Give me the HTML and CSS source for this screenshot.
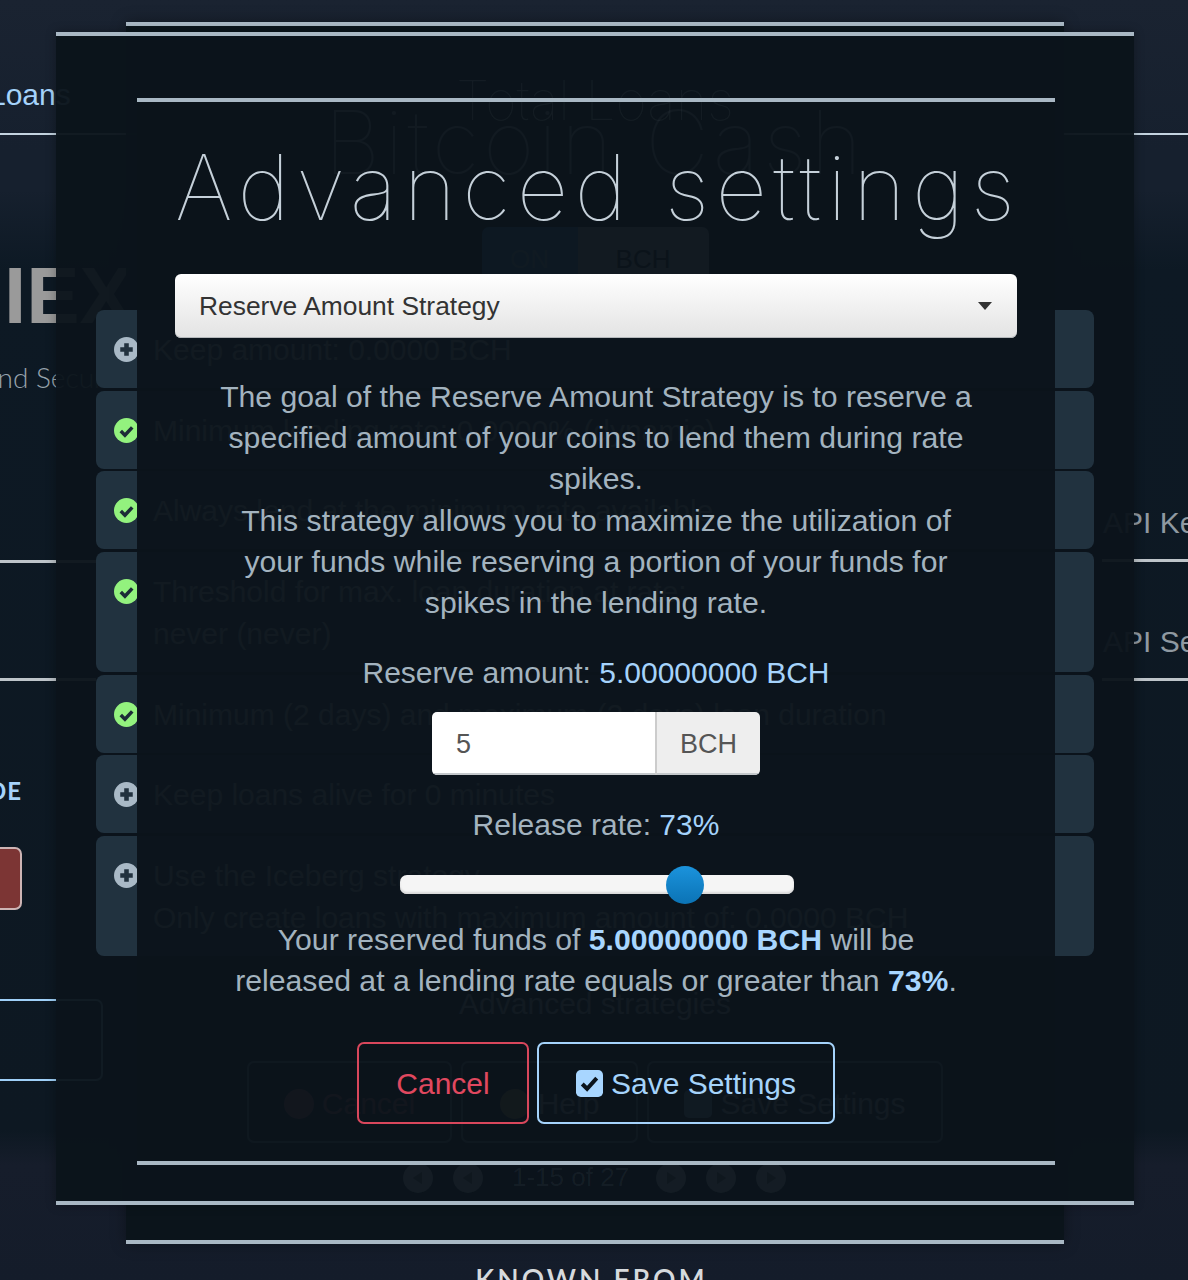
FILE: index.html
```html
<!DOCTYPE html>
<html lang="en">
<head>
<meta charset="utf-8">
<title>Advanced settings</title>
<link rel="stylesheet" href="styles.css">
</head>
<body>
<div class="site">
  <aside class="side side-left">
    <div class="tab"><span class="tab-text">Loans</span></div>
    <div class="logo">IE<span class="logo-x">X</span></div>
    <div class="tagline">and Secure</div>
    <div class="field field-a"></div>
    <div class="field field-b"></div>
    <div class="mode">MODE</div>
    <div class="red-btn"></div>
    <div class="blue-box"></div>
  </aside>

  <main class="center">
    <div class="eyebrow">Total Loans</div>
    <h2 class="coin">Bitcoin Cash</h2>
    <div class="toggle"><span class="toggle-on">ON</span><span class="toggle-off">BCH</span></div>
    <ul class="rows">
      <li class="row">
        <svg class="row-icon" viewBox="0 0 24 24"><circle cx="12" cy="12" r="12" fill="#a9b9c6"/><path d="M12 6v12M6 12h12" stroke="#22323f" stroke-width="4.4"/></svg>
        <span>Keep amount: 0.0000 BCH</span>
      </li>
      <li class="row">
        <svg class="row-icon" viewBox="0 0 24 24"><circle cx="12" cy="12" r="12" fill="#93f27e"/><path d="M6.5 12.5l4 4 7-7.5" fill="none" stroke="#1c2c37" stroke-width="3.4"/></svg>
        <span>Minimum lending rate: 0.0000% (dynamic)</span>
      </li>
      <li class="row">
        <svg class="row-icon" viewBox="0 0 24 24"><circle cx="12" cy="12" r="12" fill="#93f27e"/><path d="M6.5 12.5l4 4 7-7.5" fill="none" stroke="#1c2c37" stroke-width="3.4"/></svg>
        <span>Always lend at the minimum rate available</span>
      </li>
      <li class="row row-tall">
        <svg class="row-icon" viewBox="0 0 24 24"><circle cx="12" cy="12" r="12" fill="#93f27e"/><path d="M6.5 12.5l4 4 7-7.5" fill="none" stroke="#1c2c37" stroke-width="3.4"/></svg>
        <span>Threshold for max. loan duration at rate:<br>never (never)</span>
      </li>
      <li class="row">
        <svg class="row-icon" viewBox="0 0 24 24"><circle cx="12" cy="12" r="12" fill="#93f27e"/><path d="M6.5 12.5l4 4 7-7.5" fill="none" stroke="#1c2c37" stroke-width="3.4"/></svg>
        <span>Minimum (2 days) and maximum (2 days) loan duration</span>
      </li>
      <li class="row">
        <svg class="row-icon" viewBox="0 0 24 24"><circle cx="12" cy="12" r="12" fill="#a9b9c6"/><path d="M12 6v12M6 12h12" stroke="#22323f" stroke-width="4.4"/></svg>
        <span>Keep loans alive for 0 minutes</span>
      </li>
      <li class="row row-tall">
        <svg class="row-icon" viewBox="0 0 24 24"><circle cx="12" cy="12" r="12" fill="#a9b9c6"/><path d="M12 6v12M6 12h12" stroke="#22323f" stroke-width="4.4"/></svg>
        <span>Use the Iceberg strategy<br>Only create loans with maximum amount of: 0.0000 BCH</span>
      </li>
    </ul>
    <div class="strategies">Advanced strategies</div>
    <div class="ghost-actions">
      <span class="ghost-btn ghost-cancel"><i class="dot dot-red"></i>Cancel</span>
      <span class="ghost-btn ghost-help"><i class="dot dot-amber"></i>Help</span>
      <span class="ghost-btn ghost-save"><i class="square"></i>Save Settings</span>
    </div>
    <div class="pager">
      <i class="page-dot page-back"></i><i class="page-dot page-back"></i>
      <span class="page-label">1-15 of 27</span>
      <i class="page-dot"></i><i class="page-dot"></i><i class="page-dot"></i>
    </div>
    <div class="known">KNOWN FROM</div>
  </main>

  <aside class="side side-right">
    <div class="tab tab-right"></div>
    <div class="api api-key">API Key</div>
    <div class="api api-secret">API Secret</div>
  </aside>
</div>

<div class="modal modal-back"></div>
<div class="modal modal-mid"></div>

<section class="modal modal-front">
  <h1 class="title">Advanced settings</h1>
  <button class="select" type="button">
    <span>Reserve Amount Strategy</span>
    <svg class="caret" viewBox="0 0 14 8"><path d="M0 0h14L7 8z" fill="#333"/></svg>
  </button>
  <p class="copy">The goal of the Reserve Amount Strategy is to reserve a specified amount of your coins to lend them during rate spikes.<br>This strategy allows you to maximize the utilization of your funds while reserving a portion of your funds for spikes in the lending rate.</p>
  <p class="label label-amount">Reserve amount: <span class="accent">5.00000000 BCH</span></p>
  <div class="input-group">
    <span class="input-value">5</span>
    <span class="input-addon">BCH</span>
  </div>
  <p class="label label-rate">Release rate: <span class="accent">73%</span></p>
  <div class="slider"><span class="thumb"></span></div>
  <p class="summary">Your reserved funds of <strong>5.00000000 BCH</strong> will be<br>released at a lending rate equals or greater than <strong>73%</strong>.</p>
  <div class="actions">
    <button class="btn btn-cancel" type="button">Cancel</button>
    <button class="btn btn-save" type="button">
      <svg class="save-icon" viewBox="0 0 28 28"><rect width="28" height="28" rx="5" fill="#a8d6ff"/><path d="M6.5 14.5l5 5 10-11" fill="none" stroke="#0b141c" stroke-width="4.2"/></svg>
      Save Settings
    </button>
  </div>
</section>
</body>
</html>
```

FILE: styles.css
```css
* { box-sizing: border-box; }
html, body { margin: 0; padding: 0; }
body {
  position: relative;
  width: 1188px;
  height: 1280px;
  overflow: hidden;
  background: #0d1822;
  font-family: "Liberation Sans", Arial, sans-serif;
}

/* underlying page */
.site {
  display: grid;
  grid-template-columns: 96px 998px 94px;
  height: 1280px;
  background: linear-gradient(180deg, #1a2331 0, #16202e 150px, #16202e 190px, #0d1924 270px, #0d1822 1130px, #161d2b 1165px, #141c2a 100%);
}
.side { display: flex; flex-direction: column; min-width: 0; }
.tab {
  width: 140px;
  height: 135px;
  padding-top: 78px;
  border-bottom: 2px solid #c3d3df;
  flex: none;
}
.tab-text { display: block; margin-left: -11px; font-size: 30px; line-height: 34px; color: #a5d3fb; }
.tab-right { width: 125px; margin-left: -31px; }
.logo {
  margin-top: 132px;
  margin-left: 4px;
  font-family: "Liberation Sans Narrow", "Liberation Sans", sans-serif;
  font-weight: 700;
  font-size: 80px;
  line-height: 58px;
  color: #9a9a9a;
  white-space: nowrap;
}
.tagline {
  margin-top: 35px;
  margin-left: -16px;
  font-family: Lato, sans-serif;
  font-weight: 300;
  font-size: 28px;
  line-height: 34px;
  color: #97a3ad;
  white-space: nowrap;
}
.field { height: 82px; width: 96px; flex: none; border-bottom: 3px solid #bdc4c9; }
.field-a { margin-top: 87px; }
.field-b { margin-top: 36px; }
.mode {
  margin-top: 96px;
  margin-left: -66px;
  width: 88px;
  text-align: right;
  font-family: Lato, sans-serif;
  font-weight: 700;
  font-size: 24px;
  line-height: 28px;
  letter-spacing: 1px;
  color: #a5d3fb;
}
.red-btn {
  margin-top: 42px;
  margin-left: -40px;
  width: 62px;
  height: 63px;
  flex: none;
  border: 2px solid #cdb4b4;
  border-radius: 7px;
  background: #7c3534;
}
.blue-box {
  margin-top: 89px;
  margin-left: -20px;
  width: 123px;
  height: 82px;
  flex: none;
  border: 2px solid #9fd0f8;
  border-radius: 7px;
}

.center {
  display: flex;
  flex-direction: column;
  min-width: 0;
  padding-top: 66px;
  text-align: center;
  color: #c8d2da;
}
.eyebrow {
  position: relative;
  z-index: 5;
  height: 0;
  font-family: Inter, sans-serif;
  font-weight: 100;
  font-size: 54px;
  line-height: 70px;
  color: rgba(170, 185, 195, .06);
}
.coin {
  position: relative;
  z-index: 3;
  margin: 24px 0 0;
  font-family: Inter, sans-serif;
  font-weight: 100;
  font-size: 88px;
  line-height: 104px;
  letter-spacing: 4px;
}
.toggle {
  position: relative;
  z-index: 3;
  display: flex;
  align-self: center;
  margin-top: 33px;
  height: 64px;
  font-size: 26px;
  line-height: 64px;
}
.toggle-on { width: 96px; background: #3a9bff; border-radius: 7px 0 0 7px; color: #a5d3fb; }
.toggle-off { width: 131px; background: #c8c8c8; border-radius: 0 7px 7px 0; color: #000; }
.rows { position: relative; z-index: 3; list-style: none; margin: 19px 0 0; padding: 0; display: flex; flex-direction: column; gap: 2.67px; text-align: left; }
.row {
  display: flex;
  gap: 14px;
  min-height: 78px;
  padding: 19px 18px 16px;
  border-radius: 8px;
  background: #21323f;
  font-size: 30px;
  line-height: 42px;
}
.row-icon { width: 25px; height: 25px; flex: none; margin-top: 8px; }
.row-tall { min-height: 120px; }
.strategies { position: relative; z-index: 3; margin-top: 30px; font-size: 30px; line-height: 36px; }
.ghost-actions { position: relative; z-index: 3; display: flex; gap: 9px; margin-top: 39px; margin-left: 151px; }
.ghost-btn {
  display: flex; align-items: center; justify-content: center; gap: 8px;
  height: 82px;
  padding-top: 5px;
  border: 2px solid #8a99a6;
  border-radius: 7px;
  font-size: 30px;
}
.ghost-cancel { width: 205px; color: #e06070; }
.ghost-help { width: 177px; }
.ghost-save { width: 296px; margin-left: 0; }
.dot { width: 30px; height: 30px; border-radius: 50%; background: #e06070; }
.dot-amber { background: #e0b050; }
.square { width: 28px; height: 28px; border-radius: 5px; background: #a9d6ff; }
.pager { position: relative; z-index: 5; display: flex; align-items: center; margin-top: 20px; height: 30px; margin-left: 307px; color: rgba(170, 185, 195, .07); }
.page-dot { position: relative; width: 30px; height: 30px; border-radius: 50%; background: rgba(170, 185, 195, .06); margin-right: 20px; flex: none; }
.page-dot::after {
  content: "";
  position: absolute;
  left: 11px;
  top: 9px;
  border-left: 9px solid rgba(11, 20, 27, .6);
  border-top: 6px solid transparent;
  border-bottom: 6px solid transparent;
}
.page-back::after { left: 10px; border-left: 0; border-right: 9px solid rgba(11, 20, 27, .6); }
.page-label { width: 144px; flex: none; margin-left: 9px; font-size: 26px; text-align: left; }
.known {
  position: relative;
  z-index: 3;
  margin-top: 70px;
  margin-right: 7px;
  font-family: Lato, sans-serif;
  font-weight: 600;
  font-size: 28px;
  line-height: 32px;
  letter-spacing: 3px;
  color: #d6dadd;
}

.api {
  margin-left: 9px;
  font-size: 30px;
  line-height: 34px;
  color: #8f99a1;
  white-space: nowrap;
  height: 37px;
  flex: none;
}
.api::after {
  content: "";
  display: block;
  width: 100px;
  height: 3px;
  margin-left: -1px;
  margin-top: 19px;
  background: #bdc4c9;
}
.api-key { margin-top: 371px; }
.api-secret { margin-top: 82px; }

/* stacked dialogs */
.modal { position: absolute; border-top: 4px solid #a9b8c4; border-bottom: 4px solid #a9b8c4; }
.modal-back { z-index: 1; left: 126px; top: 22px; width: 938px; height: 1222px; background: rgba(11, 20, 27, .94); box-shadow: 0 0 14px rgba(0,0,0,.35); }
.modal-mid { z-index: 2; left: 56px; top: 32px; width: 1078px; height: 1173px; background: rgba(11, 20, 27, .965); box-shadow: 0 0 10px rgba(0,0,0,.3); }
.modal-front {
  z-index: 4;
  left: 137px;
  top: 98px;
  width: 918px;
  height: 1067px;
  padding: 0 38px;
  display: flex;
  flex-direction: column;
  align-items: center;
  text-align: center;
  color: #a3b3bf;
  background: rgba(11, 20, 27, .97);
}
.title {
  margin: 21px 0 0;
  width: 100%;
  font-family: Inter, sans-serif;
  font-weight: 100;
  font-size: 90px;
  line-height: 130px;
  letter-spacing: 6.3px;
  color: #c5d0d9;
  white-space: nowrap;
}
.select {
  display: flex;
  align-items: center;
  justify-content: space-between;
  width: 842px;
  height: 64px;
  flex: none;
  margin-top: 21px;
  padding: 0 25px 0 24px;
  border: 0;
  border-radius: 6px;
  background: linear-gradient(180deg, #ffffff, #e3e3e3);
  box-shadow: inset 0 -1px 0 #b4b8bb;
  font: 26.4px/34px "Liberation Sans", Arial, sans-serif;
  color: #333;
}
.caret { width: 14px; height: 8px; }
.copy { width: 760px; margin: 38px 0 0; font-size: 30.2px; line-height: 41.2px; }
.label { margin: 0; font-size: 30px; line-height: 41px; }
.label-amount { margin-top: 29px; }
.accent { color: #a5d3fb; }
.input-group { display: flex; width: 328px; height: 63px; flex: none; margin-top: 19px; border-radius: 5px; overflow: hidden; font-size: 27px; line-height: 64px; color: #555; text-align: left; }
.input-value { flex: 1; padding-left: 24px; background: #fff; box-shadow: inset 0 -2px 0 #c4c8cb; }
.input-addon { width: 105px; padding-left: 23px; background: #eee; border-left: 2px solid #ccc; box-shadow: inset 0 -2px 0 #c4c8cb; }
.label-rate { margin-top: 29px; }
.slider { position: relative; width: 394px; height: 19px; flex: none; margin-top: 30px; margin-left: 1px; border-radius: 7px; background: #f5f5f5; box-shadow: inset 0 -2px 2px #d8d8d8; }
.thumb { position: absolute; left: 266px; top: -9px; width: 38px; height: 38px; border-radius: 50%; background: linear-gradient(180deg, #1b93dc, #0b73b5); }
.summary { margin: 25px 0 0; font-size: 30.2px; line-height: 41px; white-space: nowrap; }
.summary strong { color: #a8d6ff; }
.actions { display: flex; gap: 8px; margin-top: 41px; }
.btn { height: 82px; border-radius: 7px; background: transparent; font: 30px/34px "Liberation Sans", Arial, sans-serif; display: flex; align-items: center; justify-content: center; padding-top: 2px; }
.btn-cancel { width: 172px; border: 2px solid #d9475c; color: #e0485f; }
.btn-save { width: 298px; gap: 8px; border: 2px solid #a5d3fb; color: #a5d3fb; }
.save-icon { width: 27px; height: 27px; }
```
